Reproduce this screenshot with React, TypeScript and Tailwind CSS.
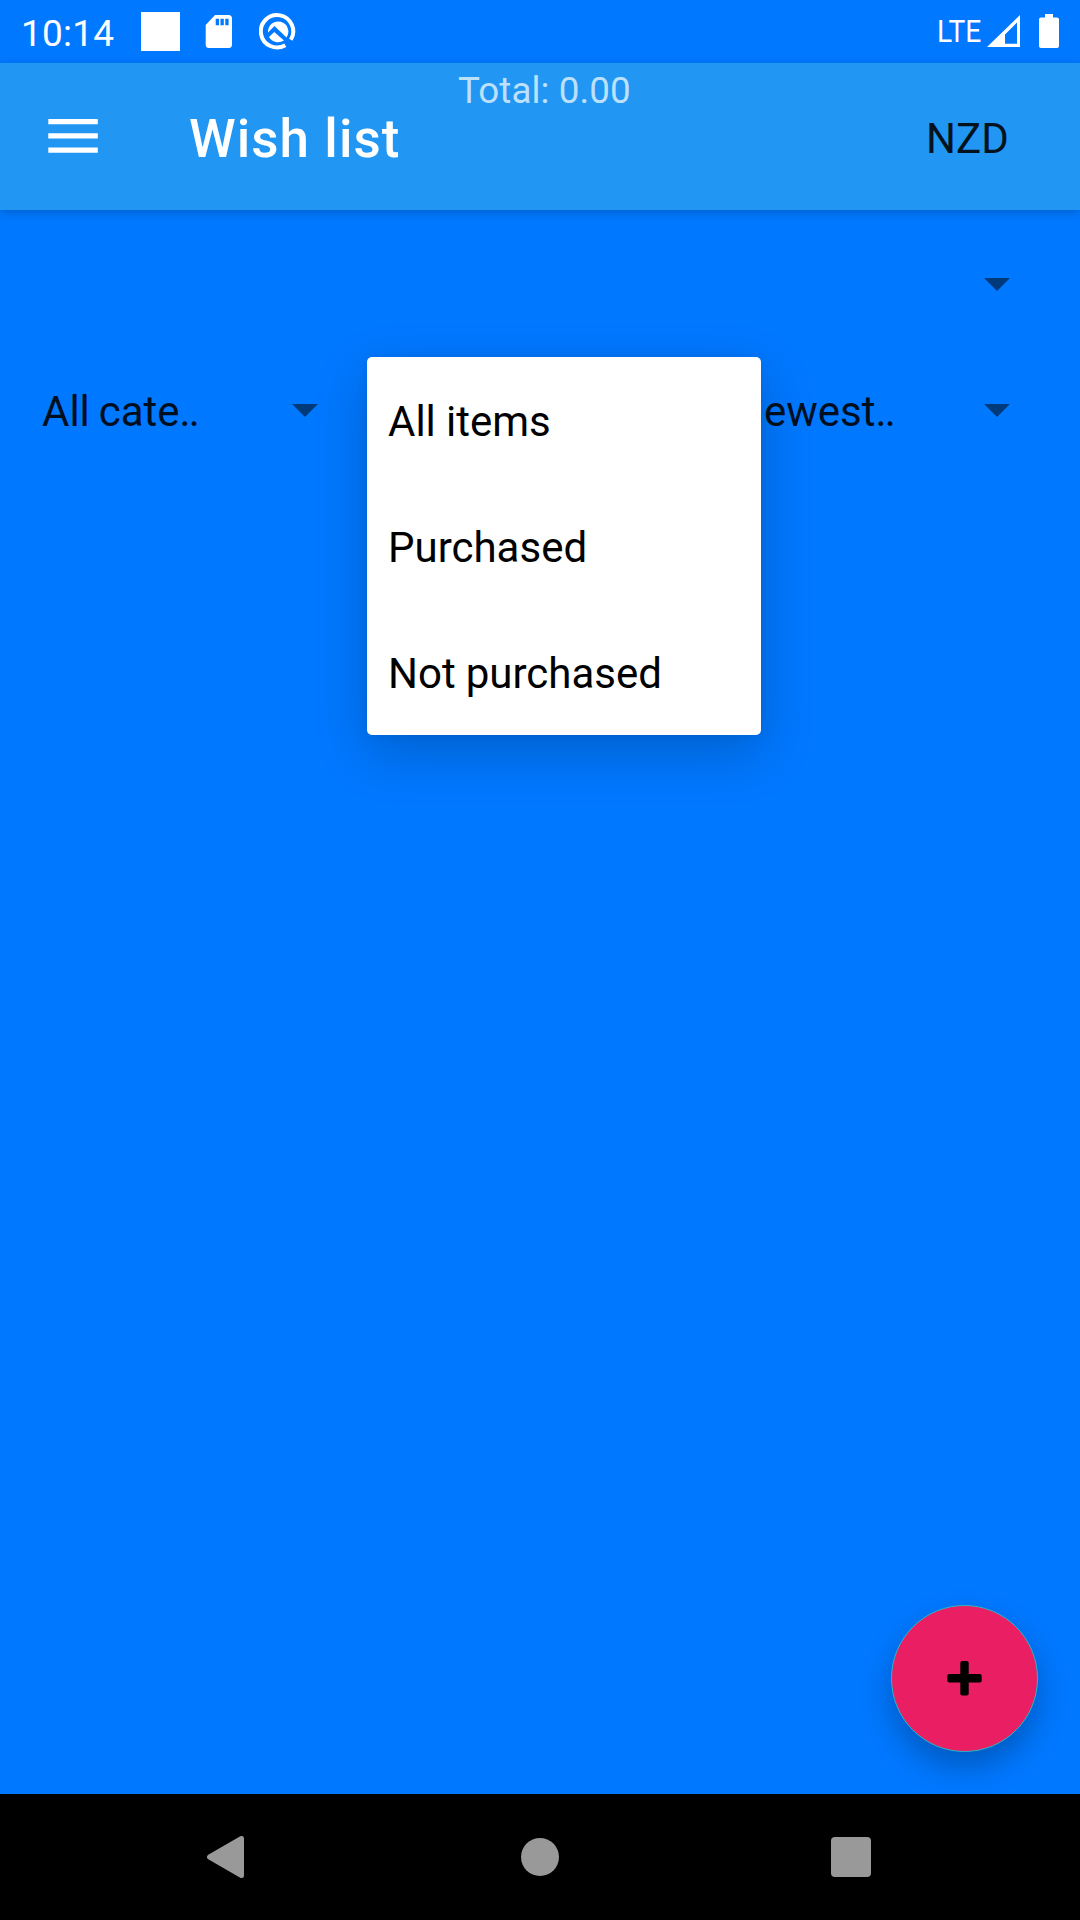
const filters = ["All cate", "", "Newest"];
const menuItems = ["All items", "Purchased", "Not purchased"];

function Caret() {
  return (
    <svg className="h-[13px] w-[26px] shrink-0" viewBox="0 0 26 13">
      <path d="M0 0H26L13 13Z" fill="#003a7a" />
    </svg>
  );
}

function StatusBar() {
  return (
    <div className="flex h-[63px] justify-between text-white">
      <div className="flex">
        <span className="ml-[21px] mt-[15px] w-[120px] text-[37px] leading-none tracking-[0.2px]">10:14</span>
        <div className="mt-3 h-[39px] w-[39px] bg-white" />
        <svg className="ml-[25px] mt-[15px] h-[33px] w-[27px]" viewBox="0 0 27 33">
          <path
            fillRule="evenodd"
            fill="#fff"
            d="M10 0H23.500Q27 0 27 3.500V29.500Q27 33 23.500 33H4Q.7 33 .7 29.500V10ZM10.700 3.700V10.300H14V3.700ZM15.500 3.700V10.300H18.800V3.700ZM20.300 3.700V10.300H23.600V3.700Z"
          />
        </svg>
        <svg className="ml-[27px] mt-[13px] h-[37px] w-[37px]" viewBox="0 0 37 37" fill="none">
          <path d="M26.300 32.200A16.200 16.200 0 1 1 31.800 26.800" stroke="#fff" strokeWidth="4" />
          <path d="M9 19.500A10.200 10.200 0 1 1 27.500 24.500L15.500 13Z" fill="#fff" />
          <path d="M15.200 19L25 27.500A10.500 10.500 0 0 1 10 24Z" fill="#fff" />
        </svg>
      </div>
      <div className="flex">
        <span className="mt-[15px] w-[50px] origin-left scale-x-[0.88] text-[32px] leading-none">LTE</span>
        <svg className="mt-[15px] h-8 w-[33px]" viewBox="0 0 33 32">
          <path fillRule="evenodd" fill="#fff" d="M33 0V32H0ZM30 7.500L18 19.500V28.800H30Z" />
        </svg>
        <svg className="ml-[19px] mr-[21px] mt-[14px] h-[34px] w-5" viewBox="0 0 20 34">
          <path fill="#fff" d="M6 0H14V3.500H18Q20 3.500 20 5.500V32Q20 34 18 34H2Q0 34 0 32V5.500Q0 3.500 2 3.500H6Z" />
        </svg>
      </div>
    </div>
  );
}

function AppBar() {
  return (
    <header className="relative flex h-[147px] items-center bg-[#2196f3] shadow-[0_3px_9px_rgba(0,0,0,0.18)]">
      <svg className="mb-px ml-12 h-[35px] w-[50px]" viewBox="0 0 50 35" aria-label="Menu">
        <path d="M.3 0H49.800V5.300H.3ZM.3 14.300H49.800V19.600H.3ZM.3 28.500H49.800V33.800H.3Z" fill="#fff" />
      </svg>
      <h1 className="ml-[91px] mt-[5px] w-[269px] whitespace-nowrap text-[53px] font-medium leading-none tracking-[1.05px] text-white">
        Wish list
      </h1>
      <span className="mt-[10px] w-[468px] self-start text-[36.75px] leading-none tracking-[0.1px] text-[#bde0fb]">
        Total: 0.00
      </span>
      <span className="mt-[5px] text-[42px] leading-none text-[#03131e]">NZD</span>
    </header>
  );
}

function Popup() {
  return (
    <ul className="absolute left-[367px] top-[357px] z-10 w-[394px] rounded-[5px] bg-white shadow-[0_18px_54px_rgba(0,0,0,0.2),0_0_12px_rgba(0,0,0,0.06)]">
      {menuItems.map((item) => (
        <li
          key={item}
          className="flex h-[126px] items-center whitespace-pre px-[21px] pt-[3px] text-[42px] leading-none text-black [word-spacing:-0.3px]"
        >
          {item}
        </li>
      ))}
    </ul>
  );
}

function NavBar() {
  return (
    <nav className="relative z-10 flex h-[126px] items-center bg-black">
      <svg className="ml-[207px] h-[42px] w-[37px]" viewBox="0 0 37 42">
        <path d="M2.500 21L34.500 2.500V39.500Z" fill="#999" stroke="#999" strokeWidth="5" strokeLinejoin="round" />
      </svg>
      <div className="ml-[277px] h-[38px] w-[38px] rounded-full bg-[#999]" />
      <div className="ml-[272px] h-10 w-10 rounded bg-[#999]" />
    </nav>
  );
}

export default function App() {
  return (
    <div className="relative flex h-[1920px] w-[1080px] flex-col overflow-hidden bg-[#0078ff] font-['Roboto',sans-serif]">
      <StatusBar />
      <AppBar />
      <main className="flex flex-1 flex-col px-[21px] pt-[11px]">
        <div className="flex h-[126px] items-center justify-end pr-[49.5px]">
          <Caret />
        </div>
        <div className="flex h-[126px]">
          {filters.map((label) => (
            <div key={label} className="flex w-[346px] items-center justify-between pl-[21px] pr-[49.5px]">
              <span className="pt-[3px] text-[42px] leading-none text-[#000f20] [word-spacing:-1.6px]">
                {label}
                {label && <span className="tracking-[-1.7px]">..</span>}
              </span>
              <Caret />
            </div>
          ))}
        </div>
        <button
          className="mb-[42px] mr-[21px] mt-auto flex h-[147px] w-[147px] items-center justify-center self-end rounded-full border border-[#2fb5c5] bg-[#e91e63] shadow-[0_15px_30px_rgba(0,0,0,0.25)]"
          aria-label="Add"
        >
          <svg className="h-[35px] w-[35px]" viewBox="0 0 35 35">
            <rect x="0.300" y="13" width="34.400" height="8.400" rx="2" />
            <rect x="13.300" y="0" width="8.400" height="34.400" rx="2" />
          </svg>
        </button>
      </main>
      <NavBar />
      <Popup />
    </div>
  );
}
